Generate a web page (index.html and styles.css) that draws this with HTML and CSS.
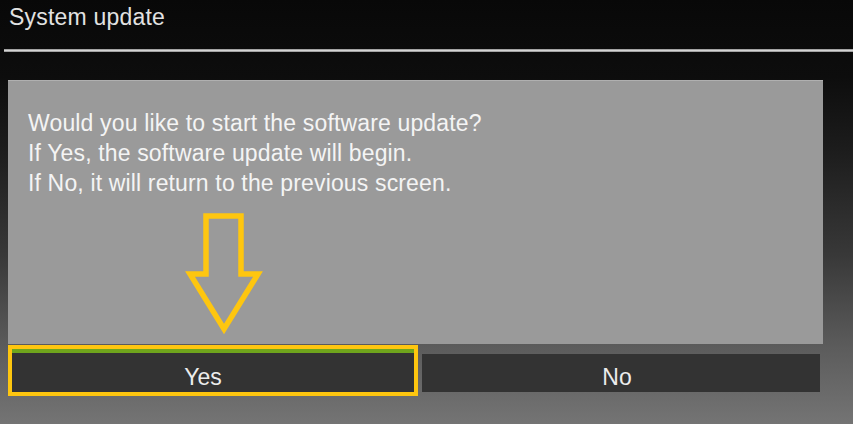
FILE: index.html
```html
<!DOCTYPE html>
<html>
<head>
    <title>System update</title>
    <link rel="stylesheet" href="styles.css">
</head>
<body>
    <div class="screen">
        <div class="title">System update</div>
        <div class="rule"></div>

        <div class="dialog">
            <p class="message">Would you like to start the software update?<br>If Yes, the software update will begin.<br>If No, it will return to the previous screen.</p>
            <svg class="hint-arrow" width="90" height="140" viewBox="0 0 90 140">
                <polygon points="26,11 61,11 61,69 78,69 44,124 10,69 26,69" fill="none" stroke="#fec60f" stroke-width="5.5" stroke-linejoin="miter"/>
            </svg>
        </div>

        <div class="choices">
            <div class="choice-frame">
                <div class="choice selected">Yes</div>
            </div>
            <div class="choice no">No</div>
        </div>
    </div>
</body>
</html>
```

FILE: styles.css
```css
body {
    margin: 0;
    height: 424px;
    overflow: hidden;
    font-family: 'Liberation Sans', Arial, sans-serif;
    background: #0b0b0b;
}

.screen {
    height: 424px;
    background: linear-gradient(to bottom, #080808 0%, #0d0d0d 18%, #1c1c1c 35%, #383838 60%, #5c5c5c 82%, #747474 100%);
}

.title {
    padding: 3px 0 0 9px;
    font-size: 23px;
    line-height: 28px;
    color: #e2e2e2;
    letter-spacing: 0.2px;
}

.rule {
    margin: 18px 0 0 4px;
    height: 3px;
    background: linear-gradient(to bottom, #8a8a8a, #d4d4d4 50%, #8a8a8a);
}

.dialog {
    position: relative;
    margin: 28px 0 0 8px;
    width: 815px;
    height: 264px;
    background: #9a9a9a;
    box-shadow: inset 0 1px 0 #b0b0b0;
}

.message {
    margin: 0;
    padding: 28px 0 0 20px;
    font-size: 23px;
    line-height: 30px;
    color: #f4f4f4;
    letter-spacing: 0.15px;
}

.hint-arrow {
    position: absolute;
    left: 172px;
    top: 125px;
}

.choices {
    display: flex;
    align-items: flex-start;
    gap: 4px;
    margin: 1px 0 0 8px;
}

.choice-frame {
    width: 402px;
    height: 43px;
    border: 4px solid #fec60f;
}

.choice {
    background: #333333;
    color: #ececec;
    font-size: 23px;
    line-height: 40px;
    text-align: center;
}

.selected {
    height: 35px;
    padding: 4px 20px 0 0;
    border-top: 4px solid #6fa51c;
}

.no {
    margin-top: 9px;
    width: 390px;
    height: 35px;
    padding: 3px 8px 0 0;
}
```
